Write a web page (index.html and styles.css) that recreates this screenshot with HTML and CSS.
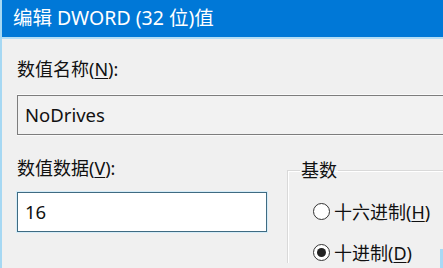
FILE: index.html
```html
<!DOCTYPE html>
<html lang="zh-CN">
<head>
<meta charset="utf-8">
<title>编辑 DWORD (32 位)值</title>
<link rel="stylesheet" href="styles.css">
</head>
<body>
<div class="window">
  <div class="titlebar">编辑 DWORD (32 位)值</div>
  <div class="content">
    <div class="label">数值名称(<u>N</u>):</div>
    <div class="field field-name">NoDrives</div>
    <div class="row">
      <div class="col-data">
        <div class="label">数值数据(<u>V</u>):</div>
        <div class="field field-data">16</div>
      </div>
      <fieldset class="group">
        <legend class="legend">基数</legend>
        <div class="radio"><span class="dot"></span><span>十六进制(<u>H</u>)</span></div>
        <div class="radio"><span class="dot checked"></span><span>十进制(<u>D</u>)</span><span class="btn-edge"></span></div>
      </fieldset>
    </div>
  </div>
</div>
</body>
</html>
```
FILE: styles.css
```css
html, body {
  margin: 0;
  padding: 0;
  width: 443px;
  height: 268px;
  overflow: hidden;
  background: #f0f0f0;
}
.window {
  width: 443px;
  height: 268px;
  box-sizing: border-box;
  border-left: 2px solid #a6d8f3;
  background: #f0f0f0;
  overflow: hidden;
  font-family: "Noto Sans", "Noto Sans CJK SC", sans-serif;
  font-size: 18px;
  color: #111;
}
.titlebar {
  height: 37px;
  line-height: 35px;
  background: #0078d7;
  color: #fff;
  padding-left: 11px;
  font-size: 19.5px;
  border-bottom: 2px solid #b3def6;
  white-space: nowrap;
}
.content {
  padding-left: 15px;
}
.label {
  height: 22px;
  line-height: 22px;
  white-space: nowrap;
}
.label u, .radio u {
  text-underline-offset: 2px;
}
.content > .label {
  margin-top: 19px;
}
.field {
  box-sizing: border-box;
  height: 40px;
  line-height: 38px;
  padding-left: 7px;
  font-size: 18.5px;
  white-space: nowrap;
}
.field-name {
  margin-top: 15px;
  width: 500px;
  border: 1px solid #7d7d7d;
  background: #f2f2f2;
  box-shadow: 0 -1px 0 #fbfbfb, 0 1px 0 #fbfbfb;
}
.row {
  display: flex;
  margin-top: 22px;
}
.col-data {
  width: 250px;
  flex: none;
}
.field-data {
  margin-top: 13px;
  width: 250px;
  border: 1px solid #3f6b82;
  background: #fff;
  box-shadow: 0 0 0 1px #d4ecf8;
}
.group {
  margin: 2px 0 0 20px;
  padding: 0 0 0 25px;
  border: 1px solid #d9d9d9;
  border-right: none;
  border-bottom: none;
  box-shadow: inset 1px 1px 0 #fff;
  min-width: 0;
  width: 200px;
  flex: none;
}
.legend {
  padding: 0 1px;
  margin-left: -13px;
  line-height: 22px;
}
.radio {
  display: flex;
  align-items: center;
  gap: 4px;
  height: 22px;
  white-space: nowrap;
}
.radio + .radio {
  margin-top: 19px;
}
.group .radio:first-of-type {
  margin-top: 19px;
}
.dot {
  box-sizing: border-box;
  width: 17px;
  height: 17px;
  border: 1.5px solid #333;
  border-radius: 50%;
  background: #fff;
  display: flex;
  align-items: center;
  justify-content: center;
  flex: none;
}
.dot.checked::after {
  content: "";
  width: 9px;
  height: 9px;
  border-radius: 50%;
  background: #222;
}
.btn-edge {
  flex: none;
  align-self: flex-start;
  margin-left: 24px;
  margin-top: 8px;
  width: 20px;
  height: 30px;
  background: #a9d9f5;
}
```
